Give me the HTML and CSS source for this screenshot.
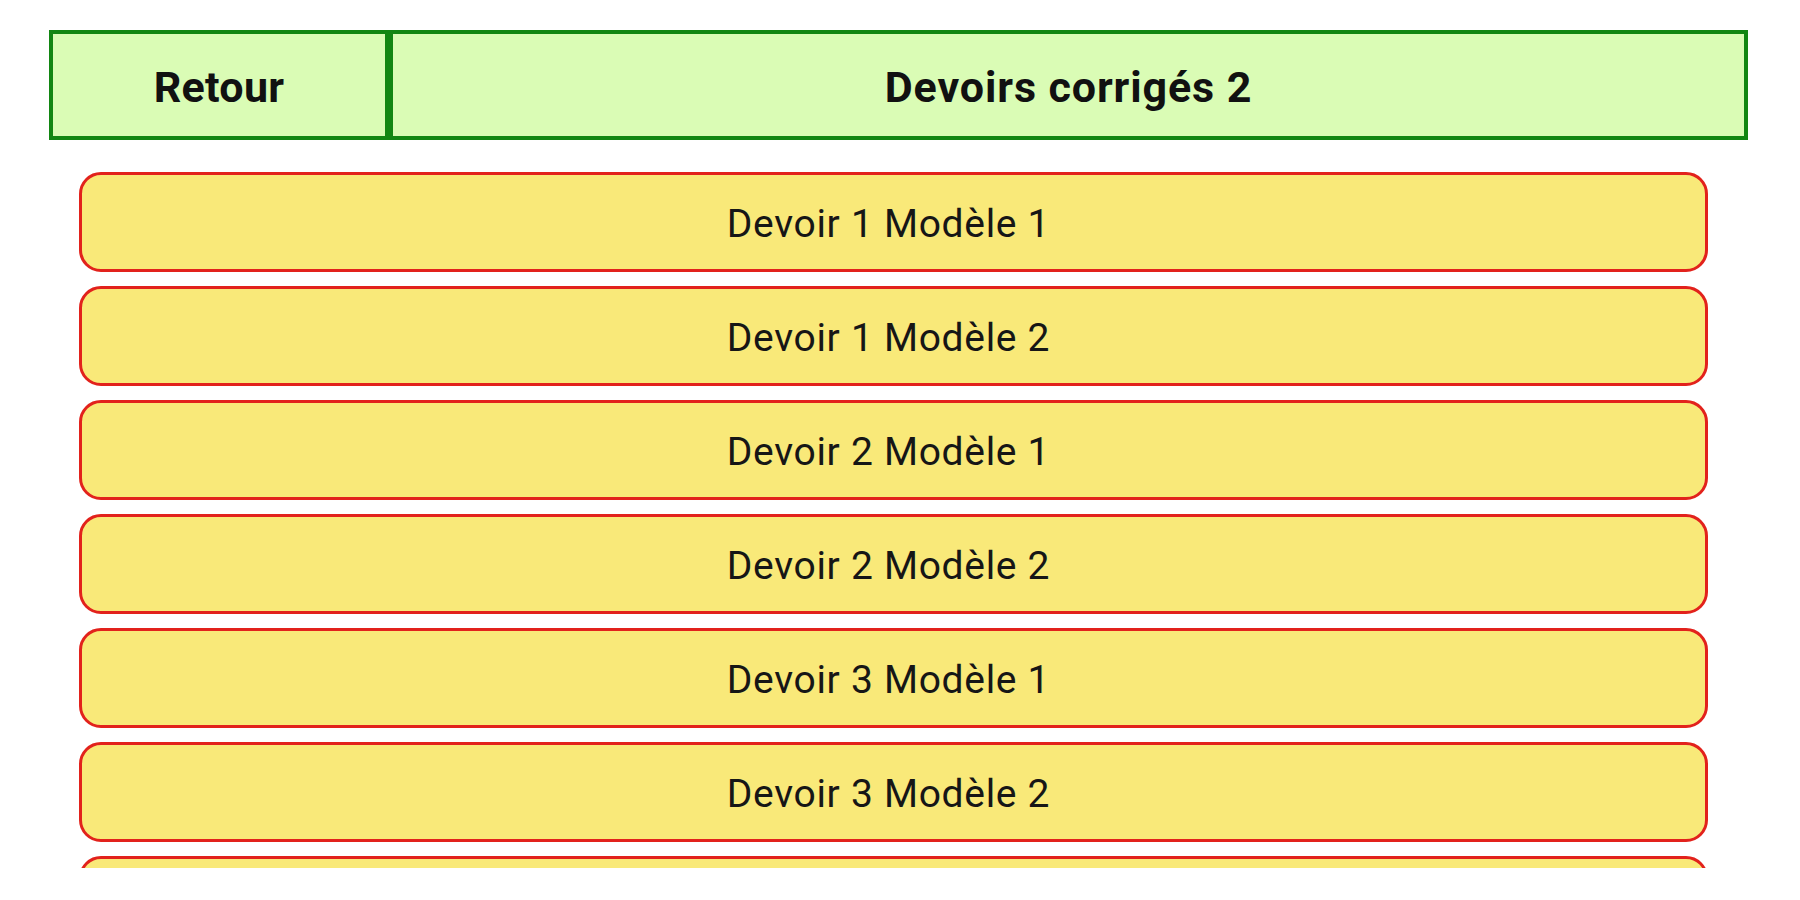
FILE: index.html
```html
<!DOCTYPE html>
<html lang="fr">
<head>
<meta charset="utf-8">
<title>Devoirs corrigés 2</title>
<link rel="stylesheet" href="styles.css">
</head>
<body>
<div class="page">
  <header class="topbar">
    <div class="back">Retour</div>
    <div class="title">Devoirs corrigés 2</div>
  </header>
  <div class="list">
    <div class="item">Devoir 1 Modèle 1</div>
    <div class="item">Devoir 1 Modèle 2</div>
    <div class="item">Devoir 2 Modèle 1</div>
    <div class="item">Devoir 2 Modèle 2</div>
    <div class="item">Devoir 3 Modèle 1</div>
    <div class="item">Devoir 3 Modèle 2</div>
    <div class="item"></div>
  </div>
</div>
</body>
</html>
```

FILE: styles.css
```css
html, body {
  margin: 0;
  padding: 0;
  background: #ffffff;
}
body {
  font-family: Roboto, "Liberation Sans", sans-serif;
  color: #111111;
}
.page {
  padding: 30px 52px 0 49px;
}
.topbar {
  display: flex;
  height: 110px;
}
.back, .title {
  display: flex;
  align-items: center;
  justify-content: center;
  background: #dafcb5;
  border: 4px solid #128612;
  box-sizing: border-box;
  padding-top: 3px;
  font-weight: 700;
  font-size: 43px;
  letter-spacing: 0.3px;
}
.back {
  width: 340px;
  flex: none;
}
.title {
  flex: 1;
  letter-spacing: 0.9px;
}
.list {
  margin-top: 32px;
  margin-left: 30px;
  width: 1629px;
  height: 696px;
  overflow: hidden;
  display: flex;
  flex-direction: column;
  gap: 14px;
}
.item {
  flex: none;
  height: 100px;
  box-sizing: border-box;
  display: flex;
  align-items: center;
  justify-content: center;
  padding: 4px 10px 0 0;
  background: #f9e979;
  border: 3px solid #e2221c;
  border-radius: 22px;
  font-size: 39px;
  letter-spacing: 0.7px;
  color: #161616;
}
```
